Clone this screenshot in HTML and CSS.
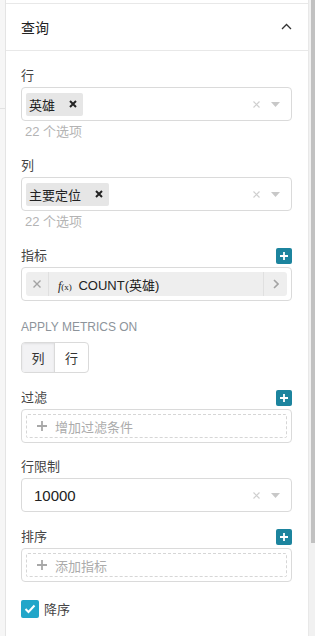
FILE: index.html
```html
<!DOCTYPE html>
<html lang="zh">
<head>
  <meta charset="UTF-8" />
  <meta name="viewport" content="width=device-width, initial-scale=1.0"/>
  <title>查询</title>
  <link rel="stylesheet" href="styles.css">
</head>
<body>
  <div class="side-strip"><div class="strip-block"></div></div>

  <div class="panel">
    <div class="panel-header">
      <span class="panel-title">查询</span>
      <svg class="chevron" width="11" height="7" viewBox="0 0 11 7"><polyline points="1,6 5.5,1.5 10,6" fill="none" stroke="#333" stroke-width="1.3"/></svg>
    </div>

    <div class="panel-body">
      <div class="field">
        <div class="field-label">行</div>
        <div class="select">
          <div class="select-values">
            <span class="tag">英雄<svg class="tag-x" width="8" height="8" viewBox="0 0 8 8"><path d="M1 1L7 7M7 1L1 7" stroke="#222" stroke-width="2"/></svg></span>
          </div>
          <div class="select-icons">
            <svg width="7" height="7" viewBox="0 0 7 7"><path d="M0.5 0.5L6.5 6.5M6.5 0.5L0.5 6.5" stroke="#cfcfcf" stroke-width="1.2"/></svg>
            <svg width="9" height="5" viewBox="0 0 9 5"><polygon points="0,0 9,0 4.5,5" fill="#c8c8c8"/></svg>
          </div>
        </div>
        <div class="helper">22 个选项</div>
      </div>

      <div class="field">
        <div class="field-label">列</div>
        <div class="select">
          <div class="select-values">
            <span class="tag">主要定位<svg class="tag-x" width="8" height="8" viewBox="0 0 8 8"><path d="M1 1L7 7M7 1L1 7" stroke="#222" stroke-width="2"/></svg></span>
          </div>
          <div class="select-icons">
            <svg width="7" height="7" viewBox="0 0 7 7"><path d="M0.5 0.5L6.5 6.5M6.5 0.5L0.5 6.5" stroke="#cfcfcf" stroke-width="1.2"/></svg>
            <svg width="9" height="5" viewBox="0 0 9 5"><polygon points="0,0 9,0 4.5,5" fill="#c8c8c8"/></svg>
          </div>
        </div>
        <div class="helper">22 个选项</div>
      </div>

      <div class="field field-wide">
        <div class="field-label row-label">指标<span class="add-btn"><svg width="8" height="8" viewBox="0 0 8 8"><path d="M4 0V8M0 4H8" stroke="#fff" stroke-width="1.8"/></svg></span></div>
        <div class="box">
          <div class="metric">
            <span class="metric-remove"><svg width="8" height="8" viewBox="0 0 8 8"><path d="M0.5 0.5L7.5 7.5M7.5 0.5L0.5 7.5" stroke="#a3a3a3" stroke-width="1.4"/></svg></span>
            <span class="metric-name"><span class="fx"><i>f</i><small>(x)</small></span> COUNT(英雄)</span>
            <span class="metric-more"><svg width="6" height="10" viewBox="0 0 6 10"><polyline points="1,1 5,5 1,9" fill="none" stroke="#a3a3a3" stroke-width="1.6"/></svg></span>
          </div>
        </div>
      </div>

      <div class="field">
        <div class="caps-label">APPLY METRICS ON</div>
        <div class="btn-group">
          <span class="btn active">列</span>
          <span class="btn">行</span>
        </div>
      </div>

      <div class="field field-tight">
        <div class="field-label row-label">过滤<span class="add-btn"><svg width="8" height="8" viewBox="0 0 8 8"><path d="M4 0V8M0 4H8" stroke="#fff" stroke-width="1.8"/></svg></span></div>
        <div class="box">
          <div class="dashed"><svg class="dashed-plus" width="10" height="10" viewBox="0 0 10 10"><path d="M5 0V10M0 5H10" stroke="#a8a8a8" stroke-width="1.8"/></svg>增加过滤条件</div>
        </div>
      </div>

      <div class="field">
        <div class="field-label">行限制</div>
        <div class="select">
          <div class="select-values"><span class="select-value">10000</span></div>
          <div class="select-icons">
            <svg width="7" height="7" viewBox="0 0 7 7"><path d="M0.5 0.5L6.5 6.5M6.5 0.5L0.5 6.5" stroke="#cfcfcf" stroke-width="1.2"/></svg>
            <svg width="9" height="5" viewBox="0 0 9 5"><polygon points="0,0 9,0 4.5,5" fill="#c8c8c8"/></svg>
          </div>
        </div>
      </div>

      <div class="field field-wide">
        <div class="field-label row-label">排序<span class="add-btn"><svg width="8" height="8" viewBox="0 0 8 8"><path d="M4 0V8M0 4H8" stroke="#fff" stroke-width="1.8"/></svg></span></div>
        <div class="box">
          <div class="dashed"><svg class="dashed-plus" width="10" height="10" viewBox="0 0 10 10"><path d="M5 0V10M0 5H10" stroke="#a8a8a8" stroke-width="1.8"/></svg>添加指标</div>
        </div>
      </div>

      <label class="check">
        <span class="check-box"><svg width="12" height="10" viewBox="0 0 12 10"><polyline points="1.5,5 4.5,8 10.5,1.5" fill="none" stroke="#fff" stroke-width="2"/></svg></span>
        降序
      </label>
    </div>
  </div>

  <div class="scrollbar"><div class="scroll-thumb"></div></div>
</body>
</html>
```

FILE: styles.css
```css
* {
  box-sizing: border-box;
}

body {
  margin: 0;
  height: 636px;
  overflow: hidden;
  display: flex;
  font-family: "Liberation Sans", "Noto Sans CJK SC", sans-serif;
  color: #333;
  background: #fff;
}

.side-strip {
  width: 6px;
  background: #f6f6f6;
  border-right: 1px solid #e4e4e4;
}

.strip-block {
  height: 109px;
  border-bottom: 1px solid #e2e2e2;
}

.panel {
  flex: 1;
  background: #fff;
  border-right: 1px solid #e8e8e8;
  padding-top: 3px;
}

.panel-header {
  height: 48px;
  border-top: 1px solid #e8e8e8;
  border-bottom: 1px solid #e8e8e8;
  display: flex;
  align-items: center;
  justify-content: space-between;
  padding: 0 16px 0 15px;
}

.panel-title {
  font-size: 14px;
  color: #222;
}

.chevron {
  margin-top: -2px;
}

.panel-body {
  padding: 16px 16px 0 15px;
}

.field {
  margin-bottom: 16px;
}

.field-wide {
  margin-bottom: 17px;
}

.field-tight {
  margin-bottom: 15px;
}

.field-label {
  font-size: 13px;
  line-height: 18px;
  color: #444;
  margin-bottom: 2px;
}

.row-label {
  display: flex;
  justify-content: space-between;
  align-items: center;
}

.add-btn {
  width: 16px;
  height: 16px;
  background: #1c849e;
  border-radius: 2px;
  display: flex;
  align-items: center;
  justify-content: center;
}

.select {
  height: 34px;
  border: 1px solid #dadada;
  border-radius: 4px;
  display: flex;
  align-items: center;
  padding: 0 11px 0 4px;
}

.select-values {
  flex: 1;
  display: flex;
  align-items: center;
}

.tag {
  display: flex;
  align-items: center;
  height: 23px;
  background: #e6e6e6;
  border-radius: 2px;
  font-size: 13px;
  color: #222;
  padding: 0 6px 0 3px;
  gap: 14px;
}

.select-value {
  font-size: 15px;
  color: #222;
  padding-left: 8px;
}

.select-icons {
  display: flex;
  align-items: center;
  gap: 11px;
}

.helper {
  font-size: 13px;
  line-height: 18px;
  color: #b4b4b4;
  margin: 2px 0 3px 4px;
}

.box {
  height: 34px;
  border: 1px solid #dadada;
  border-radius: 4px;
  padding: 4px;
}

.metric {
  height: 24px;
  background: #eeeeee;
  border-radius: 3px;
  display: flex;
  align-items: center;
}

.metric-remove {
  width: 23px;
  height: 100%;
  border-right: 1px solid #e0e0e0;
  display: flex;
  align-items: center;
  justify-content: center;
}

.metric-name {
  flex: 1;
  font-size: 13px;
  color: #222;
  padding-left: 9px;
}

.fx {
  font-family: "Liberation Serif", serif;
  margin-right: 3px;
}

.fx i {
  font-size: 12px;
}

.fx small {
  font-size: 9px;
}

.metric-more {
  width: 24px;
  height: 100%;
  border-left: 1px solid #e0e0e0;
  display: flex;
  align-items: center;
  justify-content: center;
}

.caps-label {
  font-size: 12px;
  line-height: 18px;
  color: #8d949b;
  margin-bottom: 6px;
}

.btn-group {
  display: inline-flex;
  height: 31px;
  border: 1px solid #dadada;
  border-radius: 4px;
  overflow: hidden;
}

.btn {
  width: 33px;
  display: flex;
  align-items: center;
  justify-content: center;
  font-size: 13px;
  color: #333;
}

.btn.active {
  background: #f2f2f4;
  border-right: 1px solid #dadada;
  box-shadow: inset 0 1px 2px rgba(0, 0, 0, 0.08);
}

.dashed {
  height: 24px;
  border: 1px dashed #d6d6d6;
  border-radius: 2px;
  display: flex;
  align-items: center;
  font-size: 13px;
  color: #ababab;
  padding-left: 10px;
}

.dashed-plus {
  margin-right: 8px;
}

.check {
  display: flex;
  align-items: center;
  gap: 5px;
  font-size: 13px;
  color: #444;
}

.check-box {
  width: 18px;
  height: 18px;
  background: #22a6c9;
  border-radius: 2px;
  display: flex;
  align-items: center;
  justify-content: center;
}

.scrollbar {
  width: 6px;
  background: #f1f1f1;
  padding-left: 2px;
}

.scroll-thumb {
  height: 543px;
  background: #c1c1c1;
}
```
